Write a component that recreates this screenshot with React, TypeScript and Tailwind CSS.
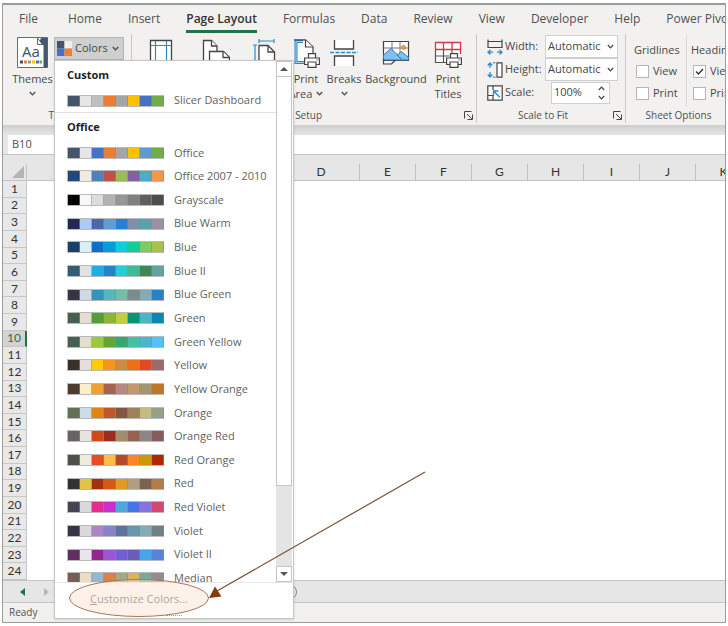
import { useState } from 'react';
import type { ReactNode } from 'react';

const TABS = [
  'File',
  'Home',
  'Insert',
  'Page Layout',
  'Formulas',
  'Data',
  'Review',
  'View',
  'Developer',
  'Help',
  'Power Pivot',
];

interface Theme {
  name: string;
  colors: string[];
}

const CUSTOM_THEME: Theme = {
  name: 'Slicer Dashboard',
  colors: ['#44546a', '#e7e6e6', '#bfbfbf', '#ed7d31', '#a5a5a5', '#ffc000', '#4472c4', '#70ad47'],
};

const OFFICE_THEMES: Theme[] = [
  { name: 'Office', colors: ['#44546a', '#e7e6e6', '#4472c4', '#ed7d31', '#a5a5a5', '#ffc000', '#5b9bd5', '#70ad47'] },
  { name: 'Office 2007 - 2010', colors: ['#1f497d', '#eeece1', '#4f81bd', '#c0504d', '#9bbb59', '#8064a2', '#4bacc6', '#f79646'] },
  { name: 'Grayscale', colors: ['#000000', '#f8f8f8', '#dddddd', '#b2b2b2', '#969696', '#808080', '#5f5f5f', '#4d4d4d'] },
  { name: 'Blue Warm', colors: ['#242852', '#accbf9', '#4a66ac', '#629dd1', '#297fd5', '#7f8fa9', '#5aa2ae', '#9d90a0'] },
  { name: 'Blue', colors: ['#17406d', '#dbeff9', '#0f6fc6', '#009dd9', '#0bd0d9', '#10cf9b', '#7cca62', '#a5c249'] },
  { name: 'Blue II', colors: ['#335b74', '#dfe3e5', '#1cade4', '#2683c6', '#27ced7', '#42ba97', '#3e8853', '#62a39f'] },
  { name: 'Blue Green', colors: ['#373545', '#cedbe6', '#3494ba', '#58b6c0', '#75bda7', '#7a8c8e', '#84acb6', '#2683c6'] },
  { name: 'Green', colors: ['#455f51', '#e3ded1', '#549e39', '#8ab833', '#c0cf3a', '#029676', '#4ab5c4', '#0989b1'] },
  { name: 'Green Yellow', colors: ['#455f51', '#e2dfcc', '#99cb38', '#63a537', '#37a76f', '#44c1a3', '#4eb3cf', '#51c3f9'] },
  { name: 'Yellow', colors: ['#39302a', '#e5dedb', '#ffca08', '#f8931d', '#ce8d3e', '#ec7016', '#e64823', '#9c6a6a'] },
  { name: 'Yellow Orange', colors: ['#4e3b30', '#fbeec9', '#f0a22e', '#a5644e', '#b58b80', '#c3986d', '#a19574', '#c17529'] },
  { name: 'Orange', colors: ['#637052', '#ccddea', '#e48312', '#bd582c', '#865640', '#9b8357', '#c2bc80', '#94a088'] },
  { name: 'Orange Red', colors: ['#696464', '#e9e5dc', '#d34817', '#9b2d1f', '#a28e6a', '#956251', '#918485', '#855d5d'] },
  { name: 'Red Orange', colors: ['#505046', '#eeece1', '#e84c22', '#ffbd47', '#b64926', '#ff8427', '#cc9900', '#b22600'] },
  { name: 'Red', colors: ['#323232', '#e5c243', '#a5300f', '#d55816', '#e19825', '#b19c7d', '#7f5f52', '#b27d49'] },
  { name: 'Red Violet', colors: ['#454551', '#d8d9dc', '#e32d91', '#c830cc', '#4ea6dc', '#4775e7', '#8971e1', '#d54773'] },
  { name: 'Violet', colors: ['#373545', '#dcd8dc', '#ad84c6', '#8784c7', '#5d739a', '#6997af', '#84acb6', '#6f8183'] },
  { name: 'Violet II', colors: ['#632e62', '#eae5eb', '#92278f', '#9b57d3', '#755dd9', '#665eb8', '#45a5ed', '#5982db'] },
  { name: 'Median', colors: ['#775f55', '#ebddc3', '#94b6d2', '#dd8047', '#a5ab81', '#d8b25c', '#7ba79d', '#968c8c'] },
];

const COLUMNS = ['E', 'F', 'G', 'H', 'I', 'J', 'K'];
const ROWS = Array.from({ length: 24 }, (_, i) => i + 1);
const ACTIVE_ROW = 10;

function Chevron({ up = false }: { up?: boolean }) {
  return (
    <svg className="w-[7px] h-[5px] shrink-0" viewBox="0 0 7 5" fill="none" stroke="#444" strokeWidth="1.2">
      <path d={up ? 'M.8 4 3.5 1.2 6.2 4' : 'M.8 1 3.5 3.8 6.2 1'} />
    </svg>
  );
}

function ThemesIcon() {
  return (
    <svg className="w-[31px] h-[31px]" viewBox="0 0 31 31">
      <path d="M.5.5h30v30H.5z" fill="#fff" stroke="#5b7088" />
      <path d="M24 1h6.500v29.500h-4V8H21z" fill="#44586f" />
      <path d="M20.5 1v6.500h5z" fill="#fff" stroke="#44586f" strokeWidth=".9" />
      <text x="5" y="20" fontSize="15" fill="#3d5168" fontFamily="Open Sans, sans-serif">
        Aa
      </text>
      <path d="M3 23.500h3v3H3z" fill="#44546a" />
      <path d="M7 23.500h3v3H7z" fill="#ed7d31" />
      <path d="M11 23.500h3v3h-3z" fill="#999" />
      <path d="M15 23.500h3v3h-3z" fill="#ffc000" />
      <path d="M19 23.500h3v3h-3z" fill="#4472c4" />
      <path d="M22.500 23.500h2.500v3h-2.500z" fill="#70ad47" />
    </svg>
  );
}

function MarginsIcon() {
  return (
    <svg className="w-6 h-8" viewBox="0 0 24 32" fill="none">
      <path d="M1.500 3.500h21v27h-21z" fill="#fff" stroke="#444" strokeWidth="1.300" />
      <path d="M6.500 4v26M17.500 4v26M2 8.500h20M2 25.500h20" stroke="#2e8bc9" strokeWidth="1.200" />
    </svg>
  );
}

function OrientationIcon() {
  return (
    <svg className="w-7 h-8" viewBox="0 0 28 32" fill="#fff" stroke="#444" strokeWidth="1.300">
      <path d="M1.500 31V3.500h8l5.500 5.500V31z" />
      <path d="M9.500 3.500V9H15" />
      <path d="M7.500 31V14.500h14l6 6V31z" />
      <path d="M21 14.500v6h6" />
    </svg>
  );
}

function SizeIcon() {
  return (
    <svg className="w-6 h-8" viewBox="0 0 24 32" fill="none">
      <path d="M6 8.500h9l6.500 6.500v16H6z" fill="#fff" stroke="#444" strokeWidth="1.300" />
      <path d="M15 8.500V15h6.500" stroke="#444" strokeWidth="1.300" />
      <path d="M6 4h15M6 2v4M21 2v4M2 8v23M0 8h4" stroke="#2e8bc9" strokeWidth="1.200" />
    </svg>
  );
}

function Printer() {
  return (
    <g fill="#fff" stroke="#444" strokeWidth="1.200">
      <path d="M4.500 5V.6h7V5" />
      <path d="M.6 5h14.800v6.500H.6z" />
      <path d="M4 9h8v5.400H4z" />
      <path d="M12.500 7h1.200" />
    </g>
  );
}

function PrintAreaIcon() {
  return (
    <svg className="w-[27px] h-8" viewBox="0 0 27 32" fill="none">
      <path d="M2 3.500h10.500L20 10v16.500H2z" fill="#fff" />
      <path d="M10 4.500H3v21h9" stroke="#2e8bc9" strokeWidth="3" />
      <path d="M10 4.500H3v21h9" stroke="#9fd0f2" />
      <path d="M1 2.800h11.500l7.500 7V17" stroke="#444" strokeWidth="1.200" />
      <path d="M12.500 3v7H20" stroke="#444" strokeWidth="1.200" fill="#fff" />
      <g transform="translate(11 16)">
        <Printer />
      </g>
    </svg>
  );
}

function BreaksIcon() {
  return (
    <svg className="w-7 h-8" viewBox="0 0 28 32">
      <path d="M4.500 3v9h19V3M4.500 29V19h19v10" fill="#fff" stroke="#444" strokeWidth="1.300" />
      <path d="M0 15.500h28" stroke="#2e8bc9" strokeWidth="1.300" strokeDasharray="4 1.500" />
    </svg>
  );
}

function BackgroundIcon() {
  return (
    <svg className="w-7 h-8" viewBox="0 0 28 32" fill="none">
      <path d="M1.500 4.500h25v19h-25z" fill="#fff" stroke="#444" strokeWidth="1.200" />
      <path d="M10 5v18M18 5v18M2 11h24" stroke="#777" />
      <circle cx="21.500" cy="10.500" r="2" fill="#f2a33a" stroke="#d07a10" strokeWidth=".8" />
      <path d="M1.500 23v-5l7.500-6.500L20.500 23z" fill="#83c0ee" stroke="#2e78b8" />
      <path d="m15 18 4.500-3.500 7 6v2.500h-6z" fill="#83c0ee" stroke="#2e78b8" />
      <path d="M1.500 22v5h8l3.500-3.500" stroke="#444" strokeWidth="1.200" />
    </svg>
  );
}

function PrintTitlesIcon() {
  return (
    <svg className="w-7 h-8" viewBox="0 0 28 32" fill="none">
      <path d="M1.500 6.500h25v19h-25z" fill="#fff" />
      <path d="M1.500 12.500v13H14M1.500 19h14M9.500 12.500v13M18 12.500V17" stroke="#555" strokeWidth="1.200" />
      <path d="M1.500 5.500h25v7h-25zM9.500 5.500v7M18 5.500v7M26.500 12v5" stroke="#d13a44" strokeWidth="1.300" />
      <g transform="translate(12 16)">
        <Printer />
      </g>
    </svg>
  );
}

function WidthIcon() {
  return (
    <svg className="w-4 h-4" viewBox="0 0 16 16" fill="none">
      <path d="M1 .5v8h14v-8M1 2.500h14" stroke="#444" strokeWidth="1.200" />
      <path d="M3.500 11 1 13.200l2.500 2.200M1 13.200h5M12.500 11l2.500 2.200-2.500 2.200M15 13.200h-5" stroke="#2e8bc9" strokeWidth="1.300" />
    </svg>
  );
}

function HeightIcon() {
  return (
    <svg className="w-4 h-4" viewBox="0 0 16 16" fill="none">
      <path d="M10 .8h5v14.400h-5z" fill="#fff" stroke="#444" strokeWidth="1.200" />
      <path d="M6 .8h3M6 15.200h3" stroke="#444" strokeDasharray="1.500 1" />
      <path d="M.8 3.500 3 1l2.200 2.500M3 1v5M.8 12.500 3 15l2.200-2.500M3 15v-5" stroke="#2e8bc9" strokeWidth="1.300" />
    </svg>
  );
}

function ScaleIcon() {
  return (
    <svg className="w-4 h-4" viewBox="0 0 16 16" fill="none">
      <path d="M.8.8h14.400v14.400H.8z" fill="#fff" stroke="#444" strokeWidth="1.200" />
      <path d="M6 1v4M1 10.500h5v4.500" stroke="#444" strokeWidth="1.200" />
      <path d="M6.500 11V6h5M6.800 6.300l6 6" stroke="#2e8bc9" strokeWidth="1.400" />
    </svg>
  );
}

function Launcher({ label }: { label: string }) {
  return (
    <button type="button" aria-label={label} className="w-4 h-4 shrink-0 flex items-center justify-center">
      <svg className="w-[9px] h-[9px]" viewBox="0 0 9 9" fill="none" stroke="#444">
        <path d="M.5 7.500v-7h7M3 3l5 5M8.500 3.500v5h-5" />
      </svg>
    </button>
  );
}

interface RibbonGroupProps {
  label: string;
  launcher?: boolean;
  className?: string;
  children: ReactNode;
}

function RibbonGroup({ label, launcher = false, className = '', children }: RibbonGroupProps) {
  return (
    <section aria-label={label} className={`shrink-0 flex flex-col border-r border-[#c8c8c8] ${className}`}>
      <div className="flex-1 flex">{children}</div>
      <div className="flex items-center h-4 text-[10px] leading-4 text-[#505050]">
        <span className="flex-1 text-center">{label}</span>
        {launcher && <Launcher label={`${label} settings`} />}
      </div>
    </section>
  );
}

interface LargeButtonProps {
  icon: ReactNode;
  lines: string[];
  arrow?: boolean;
  className: string;
}

function LargeButton({ icon, lines, arrow = false, className }: LargeButtonProps) {
  return (
    <button
      type="button"
      className={`shrink-0 flex flex-col items-center pt-[3px] leading-[15px] whitespace-nowrap ${className}`}
    >
      <span className="h-[34px]">{icon}</span>
      <span>{lines[0]}</span>
      {(lines[1] || arrow) && (
        <span className="flex items-center gap-1 h-[15px]">
          {lines[1]}
          {arrow && <Chevron />}
        </span>
      )}
    </button>
  );
}

function ThemeItem({ theme }: { theme: Theme }) {
  return (
    <button type="button" role="menuitem" className="w-full h-full flex items-center gap-2.5 pl-3 text-left hover:bg-gray-100">
      <span className="flex border-l border-y border-[#8a8a8a]/60">
        {theme.colors.map((color, i) => (
          <span key={i} className="w-3 h-[10px] border-r border-[#8a8a8a]/60" style={{ backgroundColor: color }} />
        ))}
      </span>
      <span className="whitespace-nowrap">{theme.name}</span>
    </button>
  );
}

function ColorsMenu() {
  return (
    <div
      role="menu"
      aria-label="Theme colors"
      className="absolute z-10 left-0 top-full w-60 bg-white border border-[#c6c6c6] shadow-sm text-[11px] text-[#626262]"
    >
      <div className="flex h-[521px] overflow-hidden">
        <div className="flex-1 min-w-0">
          <h2 className="h-7 pl-3 leading-7 font-bold text-[#222]">Custom</h2>
          <div className="h-6 border-b border-[#e2e2e2]">
            <ThemeItem theme={CUSTOM_THEME} />
          </div>
          <h2 className="h-7 pl-3 leading-7 font-bold text-[#222]">Office</h2>
          <ul className="grid auto-rows-fr h-[449px]">
            {OFFICE_THEMES.map((theme) => (
              <li key={theme.name} className="min-h-0">
                <ThemeItem theme={theme} />
              </li>
            ))}
          </ul>
        </div>

        {/* Scrollbar */}
        <div className="w-4 mr-px flex flex-col bg-[#e4e4e4]">
          <button type="button" aria-label="Scroll up" className="h-4 flex items-center justify-center bg-white border border-[#c4c4c4]">
            <svg className="w-2 h-1" viewBox="0 0 8 4" fill="#555">
              <path d="M0 4 4 0l4 4z" />
            </svg>
          </button>
          <div className="h-[409px] bg-white border-x border-b border-[#c4c4c4]" />
          <button type="button" aria-label="Scroll down" className="mt-auto h-4 flex items-center justify-center bg-white border border-[#c4c4c4]">
            <svg className="w-2 h-1" viewBox="0 0 8 4" fill="#555">
              <path d="M0 0h8L4 4z" />
            </svg>
          </button>
        </div>
      </div>

      <div className="flex flex-col h-9 border-t border-[#e6e6e6]">
        <button type="button" role="menuitem" className="h-8 pl-[35px] text-left">
          <span className="underline">C</span>ustomize Colors...
        </button>
        <span className="mx-auto w-4 border-t border-dotted border-[#999]" />
      </div>

      <Callout />
    </div>
  );
}

// Highlight ring and arrow that point at "Customize Colors..."
function Callout() {
  return (
    <svg
      className="absolute left-3 bottom-0 w-[360px] h-[150px] pointer-events-none"
      viewBox="0 0 360 150"
      fill="none"
    >
      <ellipse cx="72" cy="130" rx="69.500" ry="18.500" fill="#fce4d4" fillOpacity=".5" stroke="#a5765a" />
      <path d="M358 4 150 123" stroke="#7b5037" strokeWidth="1.200" />
      <path d="m142 130 6-11.500 6.500 10z" fill="#843c0c" />
    </svg>
  );
}

function ScaleToFit() {
  const [scale, setScale] = useState('100%');

  return (
    <div className="flex flex-col pl-2.5 pt-px">
      {[
        { id: 'width', label: 'Width:', icon: <WidthIcon /> },
        { id: 'height', label: 'Height:', icon: <HeightIcon /> },
      ].map(({ id, label, icon }) => (
        <div key={id} className="flex items-center h-[23px]">
          {icon}
          <label htmlFor={id} className="w-[42px] pl-0.5">
            {label}
          </label>
          <div className="relative">
            <select
              id={id}
              className="appearance-none block w-[73px] h-[23px] pl-0.5 bg-white border border-[#d0d0d0] text-[#444]"
            >
              <option>Automatic</option>
              <option>1 page</option>
            </select>
            <span className="absolute right-1 top-0 h-full flex items-center pointer-events-none">
              <Chevron />
            </span>
          </div>
        </div>
      ))}
      <div className="flex items-center h-[23px]">
        <ScaleIcon />
        <label htmlFor="scale" className="w-12 pl-0.5">
          Scale:
        </label>
        <div className="flex w-[59px] h-[22px] bg-white border border-[#d0d0d0]">
          <input
            id="scale"
            value={scale}
            onChange={(e) => setScale(e.target.value)}
            className="min-w-0 flex-1 pl-0.5 outline-none text-[#444]"
          />
          <div className="w-[15px] flex flex-col items-center justify-between py-[3px]">
            <button type="button" aria-label="Increase scale" className="flex">
              <Chevron up />
            </button>
            <button type="button" aria-label="Decrease scale" className="flex">
              <Chevron />
            </button>
          </div>
        </div>
      </div>
    </div>
  );
}

function CheckOption({ label, defaultChecked = false }: { label: string; defaultChecked?: boolean }) {
  return (
    <label className="flex items-center gap-1 h-[22px]">
      <span className="grid">
        <input
          type="checkbox"
          defaultChecked={defaultChecked}
          className="peer appearance-none col-start-1 row-start-1 w-[13px] h-[13px] bg-white border border-[#b5b5b5]"
        />
        <svg
          className="col-start-1 row-start-1 w-[13px] h-[13px] invisible peer-checked:visible pointer-events-none"
          viewBox="0 0 13 13"
          fill="none"
          stroke="#333"
          strokeWidth="1.400"
        >
          <path d="M3 6.500 5.500 9 10 4" />
        </svg>
      </span>
      {label}
    </label>
  );
}

function Ribbon() {
  return (
    <div className="flex h-[91px] pb-0.5 text-[11px] text-[#484848]">
      <RibbonGroup label="Themes" className="w-[129px]">
        <LargeButton icon={<ThemesIcon />} lines={['Themes']} arrow className="ml-2 w-[43px]" />
        <div className="relative mt-[3px] h-[23px]">
          <button
            type="button"
            aria-haspopup="menu"
            aria-expanded="true"
            className="w-[70px] h-[23px] flex items-center pl-0.5 bg-[#cfcfcf] border border-[#b3b3b3]"
          >
            <svg className="w-[15px] h-[15px] mr-[3px]" viewBox="0 0 15 15">
              <path d="M0 0h7.500v7.500H0z" fill="#44546a" />
              <path d="M7.500 0H15v7.500H7.500z" fill="#eee" />
              <path d="M0 7.500h7.500V15H0z" fill="#4472c4" />
              <path d="M7.500 7.500H15V15H7.500z" fill="#ed7d31" />
            </svg>
            <span className="mr-1">Colors</span>
            <Chevron />
          </button>
          <ColorsMenu />
        </div>
      </RibbonGroup>

      <RibbonGroup label="Page Setup" launcher className="w-[345px]">
        <LargeButton icon={<MarginsIcon />} lines={['Margins']} arrow className="w-[58px]" />
        <LargeButton icon={<OrientationIcon />} lines={['Orientation']} arrow className="w-[52px]" />
        <LargeButton icon={<SizeIcon />} lines={['Size']} arrow className="w-[46px]" />
        <LargeButton icon={<PrintAreaIcon />} lines={['Print', 'Area']} arrow className="w-9" />
        <LargeButton icon={<BreaksIcon />} lines={['Breaks']} arrow className="w-10" />
        <LargeButton icon={<BackgroundIcon />} lines={['Background']} className="w-16" />
        <LargeButton icon={<PrintTitlesIcon />} lines={['Print', 'Titles']} className="w-10" />
      </RibbonGroup>

      <RibbonGroup label="Scale to Fit" launcher className="w-[149px]">
        <ScaleToFit />
      </RibbonGroup>

      <RibbonGroup label="Sheet Options" className="w-[106px]">
        <fieldset className="w-[61px] shrink-0 pl-2 border-r border-[#dcdcdc]">
          <legend className="sr-only">Gridlines</legend>
          <div className="h-[26px] pt-2 leading-4">Gridlines</div>
          <div className="pl-0.5">
            <CheckOption label="View" />
            <CheckOption label="Print" />
          </div>
        </fieldset>
        <fieldset className="pl-1">
          <legend className="sr-only">Headings</legend>
          <div className="h-[26px] pt-2 leading-4">Headings</div>
          <div className="pl-0.5">
            <CheckOption label="View" defaultChecked />
            <CheckOption label="Print" />
          </div>
        </fieldset>
      </RibbonGroup>
    </div>
  );
}

function Sheet() {
  return (
    <div className="flex-1 flex flex-col font-['Lato','Open_Sans',sans-serif] text-[12px] text-[#333]">
      <div className="flex items-end h-[27px] overflow-hidden bg-[#e6e6e6] border-y border-[#c4c4c4]">
        <div className="w-6 shrink-0 h-4 flex items-end justify-end border-r border-[#c4c4c4] pr-0.5 pb-0.5">
          <svg className="w-3 h-3" viewBox="0 0 12 12" fill="#b4b4b4">
            <path d="M12 0v12H0z" />
          </svg>
        </div>
        {/* Columns A to C */}
        <div className="w-[256px] shrink-0" />
        <div className="w-[77px] shrink-0 h-4 text-center leading-4 border-r border-[#c0c0c0]">D</div>
        {COLUMNS.map((col) => (
          <div key={col} className="w-14 shrink-0 h-4 text-center leading-4 border-r border-[#c0c0c0]">
            {col}
          </div>
        ))}
      </div>
      <div className="flex-1 flex bg-white">
        <div className="w-6 flex flex-col">
          {ROWS.map((row) => (
            <div
              key={row}
              className={`flex-1 flex items-center justify-center leading-[14px] border-b border-[#c6c6c6] ${
                row === ACTIVE_ROW
                  ? 'bg-[#d3d3d3] text-[#217346] border-r-2 border-r-[#217346]'
                  : 'bg-[#e8e8e8] border-r border-r-[#c6c6c6]'
              }`}
            >
              {row}
            </div>
          ))}
        </div>
      </div>
    </div>
  );
}

export default function App() {
  const [activeTab, setActiveTab] = useState('Page Layout');

  return (
    <div className="min-h-screen flex bg-white pt-[3px] pb-[3px] pl-0.5 pr-0.5 font-['Open_Sans','Noto_Sans',sans-serif]">
      <div className="flex-1 min-w-0 flex flex-col overflow-hidden bg-[#f2f1f0] border border-t-2 border-[#9a9c9c]">
        <nav className="flex gap-[26px] h-[29px] pl-4 text-[12px] text-[#505050] whitespace-nowrap">
          {TABS.map((tab) => (
            <button
              key={tab}
              type="button"
              onClick={() => setActiveTab(tab)}
              className={`shrink-0 h-7 pt-0.5 border-b-[3px] first:mr-1 ${
                tab === activeTab ? 'font-semibold text-[#333] border-[#217346]' : 'border-transparent'
              }`}
            >
              {tab}
            </button>
          ))}
        </nav>

        <Ribbon />

        {/* Name box and formula bar */}
        <div className="h-2.5 bg-linear-to-b from-[#cfcfcf] to-[#e6e6e6]" />
        <div className="flex h-[19px] pl-[5px] bg-[#e6e6e6]">
          <input
            aria-label="Name box"
            defaultValue="B10"
            className="w-[90px] pl-1 bg-white text-[11px] text-[#505050] outline-none"
          />
          <input aria-label="Formula bar" className="ml-2 min-w-0 flex-1 bg-white outline-none" />
        </div>

        <Sheet />

        <div className="flex items-center h-[23px] bg-[#e6e6e6] border-y border-[#c4c4c4]">
          <button type="button" aria-label="Previous sheet" className="ml-[17px]">
            <svg className="w-[5px] h-2" viewBox="0 0 5 8" fill="#217346">
              <path d="M5 0v8L0 4z" />
            </svg>
          </button>
          <button type="button" aria-label="Next sheet" className="ml-[19px]">
            <svg className="w-[5px] h-2" viewBox="0 0 5 8" fill="#b8b8b8">
              <path d="M0 0v8l5-4z" />
            </svg>
          </button>
          <button
            type="button"
            aria-label="New sheet"
            className="ml-[232px] w-4 h-4 rounded-full border border-[#888] text-[11px] leading-3 text-[#888]"
          >
            +
          </button>
        </div>
        <footer className="h-[19px] pl-1.5 text-[10px] leading-[19px] text-[#505050]">Ready</footer>
      </div>
    </div>
  );
}
